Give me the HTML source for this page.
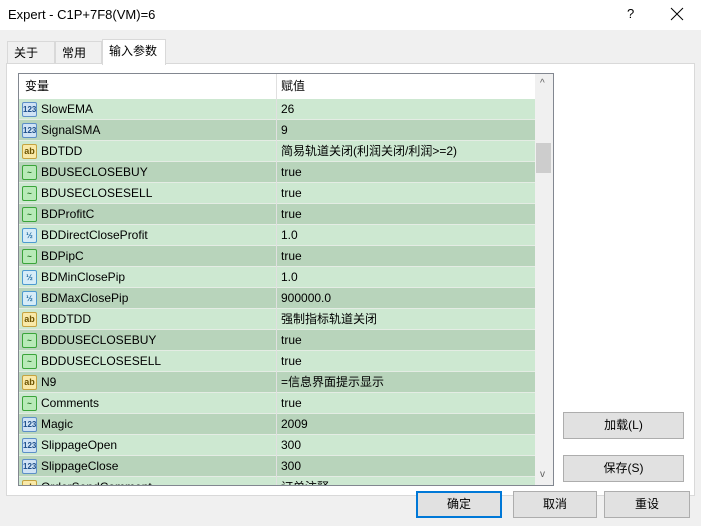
<!DOCTYPE html>
<html><head><meta charset="utf-8"><style>
*{margin:0;padding:0;box-sizing:border-box}
body{width:701px;height:526px;background:#f0f0f0;font-family:"Liberation Sans","Noto Sans CJK SC",sans-serif;font-size:12px;line-height:15px;color:#000;position:relative;overflow:hidden}
.abs{position:absolute}
.title{left:0;top:0;width:701px;height:30px;background:#fff}
.tab{top:41px;height:23px;border:1px solid #d9d9d9;border-bottom:none;background:#f0f0f0;padding:4px 0 0 6px;font-size:12px}
.panel{left:6px;top:63px;width:689px;height:433px;background:#fff;border:1px solid #d9d9d9}
.list{left:18px;top:73px;width:536px;height:413px;border:1px solid #828790;background:#fff;overflow:hidden}
.row{position:absolute;left:0;width:516px;height:21px;border-bottom:1px solid #e4ece4}
.row span{position:absolute;top:3px;line-height:15px;height:15px;white-space:nowrap}
.n{left:22px}.v{left:262px}
.div{position:absolute;left:257px;top:0;width:1px;height:413px;background:#e0e0e0}
.ic{position:absolute;left:3px;top:3px;width:15px;height:15px;border-radius:2px;font-size:8px;line-height:13px;text-align:center;font-weight:bold}
.i1{background:#cfe2f5;border:1px solid #5d8fc7;color:#1e4f8a}
.i2{background:#f9e9a8;border:1px solid #c5a340;color:#6b5200;font-size:9px}
.i3{background:#b8eab8;border:1px solid #3aa43a;color:#207020}
.i4{background:#d6ecf8;border:1px solid #4d9ad0;color:#1d6aa0}
.btn{background:#e1e1e1;border:1px solid #adadad;text-align:center;line-height:25px}
</style></head><body>
<div class="abs title"></div>
<div class="abs" style="left:8px;top:7px;font-size:13px">Expert - C1P+7F8(VM)=6</div>
<div class="abs" style="left:627px;top:6px;font-size:13px">?</div>
<svg class="abs" style="left:670px;top:7px" width="14" height="14"><path d="M1 1L13 13M13 1L1 13" stroke="#000" stroke-width="1"/></svg>
<div class="abs tab" style="left:7px;width:48px">关于</div>
<div class="abs tab" style="left:55px;width:47px">常用</div>
<div class="abs panel"></div>
<div class="abs tab" style="left:102px;top:39px;width:64px;height:26px;background:#fff;padding-top:4px">输入参数</div>
<div class="abs list">
<div class="row" style="top:0;height:25px;background:#fff;border:none"><span class="n" style="left:6px;top:5px">变量</span><span class="v" style="top:5px">赋值</span></div>
<div id="rows"></div>
<div class="div"></div>
<div style="position:absolute;left:516px;top:0;width:18px;height:411px;background:#f0f0f0"></div>
<div style="position:absolute;left:517px;top:69px;width:15px;height:30px;background:#cdcdcd"></div>
<div style="position:absolute;left:521px;top:2px;font-size:10px;color:#606060">^</div>
<div style="position:absolute;left:521px;top:393px;font-size:10px;color:#606060">v</div>
</div>
<div class="abs btn" style="left:563px;top:412px;width:121px;height:27px">加载(L)</div>
<div class="abs btn" style="left:563px;top:455px;width:121px;height:27px">保存(S)</div>
<div class="abs btn" style="left:416px;top:491px;width:86px;height:27px;border:2px solid #0078d7;line-height:23px">确定</div>
<div class="abs btn" style="left:513px;top:491px;width:84px;height:27px">取消</div>
<div class="abs btn" style="left:604px;top:491px;width:86px;height:27px">重设</div>
<script>
var d=[["1","SlowEMA","26"],["1","SignalSMA","9"],["2","BDTDD","简易轨道关闭(利润关闭/利润>=2)"],["3","BDUSECLOSEBUY","true"],["3","BDUSECLOSESELL","true"],["3","BDProfitC","true"],["4","BDDirectCloseProfit","1.0"],["3","BDPipC","true"],["4","BDMinClosePip","1.0"],["4","BDMaxClosePip","900000.0"],["2","BDDTDD","强制指标轨道关闭"],["3","BDDUSECLOSEBUY","true"],["3","BDDUSECLOSESELL","true"],["2","N9","=信息界面提示显示"],["3","Comments","true"],["1","Magic","2009"],["1","SlippageOpen","300"],["1","SlippageClose","300"],["2","OrderSendComment","订单注释"]];
var t={"1":"123","2":"ab","3":"~","4":"½"};var h="";
d.forEach(function(r,i){h+='<div class="row" style="top:'+(25+21*i)+'px;background:'+(i%2?'#b8d4bb':'#cde8d1')+'"><div class="ic i'+r[0]+'">'+t[r[0]]+'</div><span class="n">'+r[1]+'</span><span class="v">'+r[2]+'</span></div>';});
document.getElementById("rows").innerHTML=h;
</script>
</body></html>
